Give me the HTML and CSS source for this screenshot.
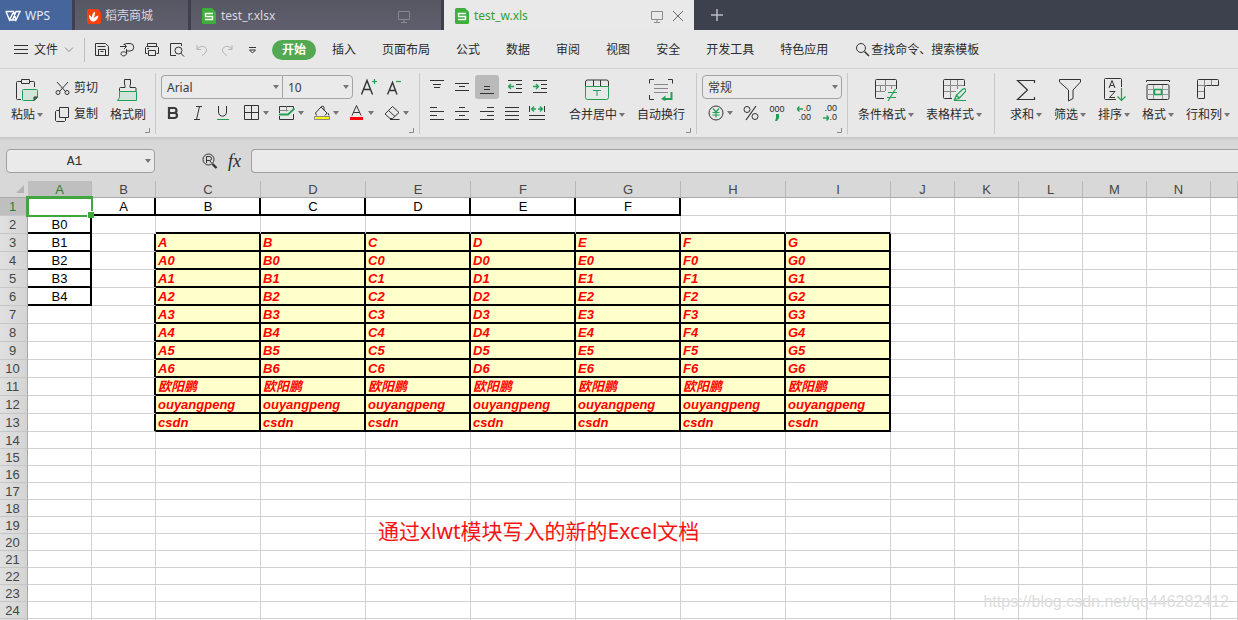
FILE: index.html
```html
<!DOCTYPE html>
<html lang="zh-CN">
<head>
<meta charset="utf-8">
<meta name="viewport" content="width=device-width, initial-scale=1">
<title>test_w.xls - WPS</title>
<link rel="stylesheet" href="styles.css">
</head>
<body>
<header class="tabs">
  <button class="tab tab-home">
    <svg width="16" height="12" viewBox="0 0 16 12" class="line white"><path d="M.5 1.500H4M1 1.500 4.500 10 8 3M3.500 1.500h5L11 10l4-8.500h-4L7.500 10h-3M7.500 10H11" stroke-width="1.400"/></svg>
    <span>WPS</span>
  </button>
  <button class="tab tab-store">
    <svg width="14" height="15" viewBox="0 0 14 15"><path d="M2 0h7a5 5 0 0 1 5 5v8a2 2 0 0 1-2 2H2a2 2 0 0 1-2-2V2a2 2 0 0 1 2-2z" fill="#f5410c"/><path d="M2 6c1.500.5 2.500 1.500 3 3C4.500 6.500 5.500 4 8 2.500c.5 3-1 5-1.500 7C7.500 8 9 7 11.500 6.500 11 10 9 12.500 6 12.500 3 12 2 9 2 6z" fill="#fff"/></svg>
    <span>稻壳商城</span>
  </button>
  <button class="tab tab-file">
    <svg width="14" height="16" viewBox="0 0 14 16"><path d="M1.500 0H10l4 4v10.500a1.500 1.500 0 0 1-1.500 1.500h-11A1.500 1.500 0 0 1 0 14.500v-13A1.500 1.500 0 0 1 1.500 0z" fill="#3fae3c"/><path d="M11 5.500H3.500v3h7v3H3" fill="none" stroke="#fff" stroke-width="1.400"/></svg>
    <span>test_r.xlsx</span>
    <svg class="line dim tab-screen" width="12" height="12" viewBox="0 0 12 12"><path d="M.5.500h11v8H.5zM6 8.500v3M3 11.500h6"/></svg>
  </button>
  <button class="tab tab-file tab-active">
    <svg width="14" height="16" viewBox="0 0 14 16"><path d="M1.500 0H10l4 4v10.500a1.500 1.500 0 0 1-1.500 1.500h-11A1.500 1.500 0 0 1 0 14.500v-13A1.500 1.500 0 0 1 1.500 0z" fill="#3fae3c"/><path d="M11 5.500H3.500v3h7v3H3" fill="none" stroke="#fff" stroke-width="1.400"/></svg>
    <span>test_w.xls</span>
    <svg class="line dim tab-screen" width="12" height="12" viewBox="0 0 12 12"><path d="M.5.500h11v8H.5zM6 8.500v3M3 11.500h6"/></svg>
    <svg class="line tab-close" width="10" height="10" viewBox="0 0 10 10"><path d="M0 0 10 10M10 0 0 10"/></svg>
  </button>
  <button class="tab-new" aria-label="新建"><svg class="line" width="12" height="12" viewBox="0 0 12 12"><path d="M6 0v12M0 6h12" stroke-width="1.500"/></svg></button>
</header>

<nav class="menu">
  <button class="menu-file">
    <svg class="line" width="14" height="11" viewBox="0 0 14 11"><path d="M0 1.500h14M0 5.500h14M0 9.500h14"/></svg>
    <span>文件</span>
    <svg class="line dim" width="10" height="6" viewBox="0 0 10 6"><path d="M1 .5 5 4.500 9 .5"/></svg>
  </button>
  <div class="quick">
    <button aria-label="保存"><svg class="line" width="16" height="16" viewBox="0 0 16 16"><path d="M1.500 1.500h10l3 3v9h-13zM3.500 4.500h8M4.500 13.500v-6h7v6M6.500 9.500h3"/></svg></button>
    <button aria-label="输出"><svg class="line" width="16" height="16" viewBox="0 0 16 16"><path d="M1 4.500h6M5 2l2.500 2.500L5 7M4.500 2.500 8 1.500h3a3.500 3.500 0 0 1 0 7.500H7.500M7.500 7v4c0 4-5.500 3.500-5.500.5 0-2.500 5-2 6 0"/></svg></button>
    <button aria-label="打印"><svg class="line" width="16" height="16" viewBox="0 0 16 16"><path d="M3.500 4.500v-3h9v3M3.500 11.500h-2v-6l1-1h11l1 1v6h-2M4.500 8.500h7v5h-7zM3 6.500h2"/></svg></button>
    <button aria-label="打印预览"><svg class="line" width="16" height="16" viewBox="0 0 16 16"><path d="M7 13.500H1.500v-12h11V4M11.500 11 15 14.500"/><circle cx="9.500" cy="8.500" r="3.500"/></svg></button>
    <button aria-label="撤销"><svg class="line faint" width="16" height="16" viewBox="0 0 16 16"><path d="M3 3v4.500h4M3 7.500C5 3.500 12 3 12.500 8c0 2.500-2 4-4.500 5.500"/></svg></button>
    <button aria-label="恢复"><svg class="line faint" width="16" height="16" viewBox="0 0 16 16"><path d="M13 3v4.500H9M13 7.500C11 3.500 4 3 3.500 8c0 2.500 2 4 4.500 5.500"/></svg></button>
    <button aria-label="更多"><svg class="line" width="16" height="16" viewBox="0 0 16 16"><path d="M5 5.500h7M5.500 8 8.500 11 11.500 8z"/></svg></button>
  </div>
  <div class="menu-items">
    <button class="current">开始</button><button>插入</button><button>页面布局</button><button>公式</button><button>数据</button><button>审阅</button><button>视图</button><button>安全</button><button>开发工具</button><button>特色应用</button>
  </div>
  <button class="find">
    <svg class="line" width="15" height="15" viewBox="0 0 15 15"><circle cx="6" cy="6" r="4.500"/><path d="M9.500 9.500 14 14" stroke-width="1.500"/></svg>
    <span>查找命令、搜索模板</span>
  </button>
</nav>

<section class="ribbon" aria-label="开始">
  <div class="group g-clip">
    <button class="big">
      <svg class="line" width="24" height="24" viewBox="0 0 24 24"><path d="M6.500 3.500h-4a1 1 0 0 0-1 1v16a1 1 0 0 0 1 1H6M14.500 3.500h4a1 1 0 0 1 1 1V9M6.500 1.500h8v4h-8z"/><path class="green fill" d="M8.500 11.500h13a1 1 0 0 1 1 1V19l-3.500 3.500H8.500a1 1 0 0 1-1-1v-9a1 1 0 0 1 1-1z"/><path d="M19 22.500V19h3.500z" fill="#239f54"/></svg>
      <span class="lbl">粘贴<i class="caret"></i></span>
    </button>
    <div class="pair">
      <button><svg class="line" width="15" height="15" viewBox="0 0 15 15"><path d="M2 1l8.500 9.500M13 1 4.500 10.500"/><circle cx="3" cy="11.500" r="2"/><circle cx="12" cy="11.500" r="2"/></svg>剪切</button>
      <button><svg class="line" width="15" height="15" viewBox="0 0 15 15"><path d="M4.500.5h9v10h-9zM4.500 3.500h-3l-1 1v9l1 1h8l1-1v-3"/></svg>复制</button>
    </div>
    <button class="big">
      <svg class="line" width="24" height="24" viewBox="0 0 24 24"><path d="M3.500 13V10.500a1 1 0 0 1 1-1H9V7.500L8.500 6V1.500h6V6L14 7.500v2h5a1 1 0 0 1 1 1V13"/><path class="green fill" d="M3.500 13.500h17v9h-19l2-3z"/></svg>
      <span class="lbl">格式刷</span>
    </button>
    <svg class="line dim launch" width="5" height="5" viewBox="0 0 5 5"><path d="M4.500 0v4.500H0"/></svg>
  </div>

  <div class="group g-font">
    <div class="rows">
      <div class="row top">
        <div class="combos">
          <label class="combo c-font"><select aria-label="字体"><option>Arial</option></select><i class="caret"></i></label>
          <label class="combo c-size"><select aria-label="字号"><option>10</option></select><i class="caret"></i></label>
        </div>
        <button aria-label="增大字号"><svg class="line" width="18" height="18" viewBox="0 0 18 18"><path d="M.5 16.500 6 2.500l5.500 14M2.500 11.500h7" stroke-width="1.400"/><path class="green" d="M11 3.500h5M13.500 1v5" stroke-width="1.200"/></svg></button>
        <button aria-label="减小字号"><svg class="line" width="18" height="18" viewBox="0 0 18 18"><path d="M.5 16.500 5.500 4.500l4.500 12M2.500 12.500h6" stroke-width="1.400"/><path class="green" d="M9 3.500h5" stroke-width="1.200"/></svg></button>
      </div>
      <div class="row low font-low">
        <button aria-label="加粗"><svg width="16" height="16" viewBox="0 0 16 16"><path d="M4 3h5a2.500 2.500 0 0 1 0 5H4zM4 8h5.500a2.500 2.500 0 0 1 0 5H4z" fill="none" stroke="#3a3a3a" stroke-width="2.200"/></svg></button>
        <button aria-label="倾斜"><svg class="line" width="16" height="16" viewBox="0 0 16 16"><path d="M6 1.500h6M4 14.500h6M9.500 1.500l-3 13"/></svg></button>
        <button aria-label="下划线"><svg class="line" width="16" height="16" viewBox="0 0 16 16"><path d="M3.500 1v6c0 5.500 8 5.500 8 0V1"/><path class="green" d="M2 14.500h12"/></svg></button>
        <div class="splits">
          <button aria-label="边框"><svg class="line" width="16" height="16" viewBox="0 0 16 16"><path d="M.5.500h14v14H.5zM7.500.5v14M.5 7.500h14"/></svg><i class="caret"></i></button>
          <button aria-label="绘制边框"><svg class="line" width="16" height="16" viewBox="0 0 16 16"><path d="M.5 8V1.500h14V4M14.500 9v5.500H.5V11"/><path d="M7.500 1.500v5M.5 5.500h9" stroke="#888"/><path class="green" d="M0 9.500h9l6.500-6" stroke-width="1.800"/></svg><i class="caret"></i></button>
          <button aria-label="填充颜色"><svg class="line" width="16" height="16" viewBox="0 0 16 16"><path d="M2.500 10.500 1.500 8 7 2c1-1.500 3-1 3 .5v3M7 2l6 6-2 2.500M14 8l1 2.500"/><path d="M.5 11.500h15v3H.5z" fill="#ff0" stroke="#888"/></svg><i class="caret"></i></button>
          <button aria-label="字体颜色"><svg class="line" width="16" height="16" viewBox="0 0 16 16"><path d="M3 10.500 7.500.5l4.500 10M4.500 7.500h6"/><path d="M1 13.500h13" stroke="red" stroke-width="3"/></svg><i class="caret"></i></button>
          <button aria-label="清除"><svg class="line" width="16" height="16" viewBox="0 0 16 16"><path d="M8.500 1.500 15 7.500l-6.500 6H6L1 9zM4.500 5.500l6.500 6M6 14.500h9.500"/></svg><i class="caret"></i></button>
        </div>
      </div>
    </div>
    <svg class="line dim launch" width="5" height="5" viewBox="0 0 5 5"><path d="M4.500 0v4.500H0"/></svg>
  </div>

  <div class="group g-align">
    <div class="align">
      <button aria-label="顶端对齐"><svg class="line" width="14" height="14" viewBox="0 0 14 14"><path d="M0 .5h14M3 4.500h8M4 7.500h6"/></svg></button>
      <button aria-label="垂直居中"><svg class="line" width="14" height="14" viewBox="0 0 14 14"><path d="M0 3.500h14M4 6.500h6M0 10.500h14"/></svg></button>
      <button aria-label="底端对齐" class="pressed"><svg class="line" width="14" height="14" viewBox="0 0 14 14"><path d="M4 6.500h6M4 9.500h6M0 13.500h14"/></svg></button>
      <button aria-label="减少缩进" class="indent"><svg class="line" width="14" height="14" viewBox="0 0 14 14"><path d="M0 .5h14M8 4.500h6M8 8.500h6M0 12.500h14"/><path class="green" d="M6 6.500H.5M3 4 .5 6.500 3 9" stroke-width="1.300"/></svg></button>
      <button aria-label="增加缩进" class="indent"><svg class="line" width="14" height="14" viewBox="0 0 14 14"><path d="M0 .5h14M8 4.500h6M8 8.500h6M0 12.500h14"/><path class="green" d="M0 6.500h5.500M3 4l2.500 2.500L3 9" stroke-width="1.300"/></svg></button>
      <button aria-label="左对齐"><svg class="line" width="14" height="14" viewBox="0 0 14 14"><path d="M0 1.500h7M0 5.500h14M0 9.500h7M0 13.500h14"/></svg></button>
      <button aria-label="水平居中"><svg class="line" width="14" height="14" viewBox="0 0 14 14"><path d="M4 1.500h6M0 5.500h14M4 9.500h6M0 13.500h14"/></svg></button>
      <button aria-label="右对齐"><svg class="line" width="14" height="14" viewBox="0 0 14 14"><path d="M7 1.500h7M0 5.500h14M7 9.500h7M0 13.500h14"/></svg></button>
      <button aria-label="两端对齐"><svg class="line" width="14" height="14" viewBox="0 0 14 14"><path d="M0 1.500h14M0 5.500h14M0 9.500h14M0 13.500h14"/></svg></button>
      <button aria-label="分散对齐"><svg class="line" width="16" height="14" viewBox="0 0 16 14"><path d="M.5 0v6M15.500 0v6M0 9.500h16M0 13.500h16"/><path class="green" d="M2.500 3H7M9 3h4.500M5 .5 2.500 3 5 5.500M11 .5 13.500 3 11 5.500" stroke-width="1.300"/></svg></button>
    </div>
    <button class="big merge">
      <svg class="line" width="24" height="24" viewBox="0 0 24 24"><path d="M.5 8.500V4a2 2 0 0 1 2-2h19a2 2 0 0 1 2 2v4.500M8.500 2v6M15.500 2v6"/><path class="green" d="M.5 8.500h23v11a2 2 0 0 1-2 2h-19a2 2 0 0 1-2-2zM8 12.500h8M12 12.500V18"/></svg>
      <span class="lbl">合并居中<i class="caret"></i></span>
    </button>
    <button class="big">
      <svg class="line" width="24" height="24" viewBox="0 0 24 24"><path d="M.5 5.500v-4H5M19 1.500h4.500v4M.5 17v4.500H5"/><path d="M5 6.500h14M5 10.500h14M5 14.500h14" stroke="#888"/><path class="green" d="M22.500 14v7H14" stroke-width="2"/><path d="M16.500 17.500v5.500L12 21z" fill="#239f54" stroke="none"/></svg>
      <span class="lbl">自动换行</span>
    </button>
    <svg class="line dim launch" width="5" height="5" viewBox="0 0 5 5"><path d="M4.500 0v4.500H0"/></svg>
  </div>

  <div class="group g-number">
    <div class="rows">
      <label class="combo c-number"><select aria-label="数字格式"><option>常规</option></select><i class="caret"></i></label>
      <div class="row low num-low">
        <button aria-label="货币"><svg class="line" width="16" height="16" viewBox="0 0 16 16"><circle cx="8" cy="8" r="7"/><path class="green" d="M5 3.500l3 3.500 3-3.500M8 7v5.500M4.500 7.500h7M4.500 10h7" stroke-width="1.200"/></svg><i class="caret"></i></button>
        <button aria-label="百分比"><svg class="line" width="16" height="16" viewBox="0 0 16 16"><circle cx="4" cy="4.500" r="3"/><circle cx="12" cy="11.500" r="3"/><path d="M13 1 3 15" stroke-width="1.200"/></svg></button>
        <button class="digits" aria-label="千位分隔"><span>000</span><svg width="4" height="7" viewBox="0 0 4 7"><path d="M1 0h3v4L2 7H0l1-3z" fill="#239f54"/></svg></button>
        <button class="digits right" aria-label="增加小数位"><span><svg class="line" width="6" height="6" viewBox="0 0 6 6"><path class="green" d="M0 3h6M2.500.5 0 3l2.500 2.500" stroke-width="1.300"/></svg>.0</span><span>.00</span></button>
        <button class="digits right" aria-label="减少小数位"><span>.00</span><span><svg class="line" width="6" height="6" viewBox="0 0 6 6"><path class="green" d="M0 3h6M3.500.5 6 3 3.500 5.500" stroke-width="1.300"/></svg>.0</span></button>
      </div>
    </div>
    <svg class="line dim launch" width="5" height="5" viewBox="0 0 5 5"><path d="M4.500 0v4.500H0"/></svg>
  </div>

  <div class="group g-style">
    <button class="big">
      <svg class="line" width="24" height="24" viewBox="0 0 24 24"><path d="M10 20.500H2.500a1 1 0 0 1-1-1v-17a1 1 0 0 1 1-1h19a1 1 0 0 1 1 1V11"/><path d="M2 7.500h20M2 13.500h9M11.500 2v11M17.500 7.500V11M6.500 7.500v6" stroke="#888"/><path class="green" d="M14 14.500h9M13 19.500h9M21.500 11 14 23" stroke-width="1.200"/></svg>
      <span class="lbl">条件格式<i class="caret"></i></span>
    </button>
    <button class="big">
      <svg class="line" width="24" height="24" viewBox="0 0 24 24"><path d="M10 20.500H2.500a1 1 0 0 1-1-1v-17a1 1 0 0 1 1-1h19a1 1 0 0 1 1 1V8"/><path d="M2 7.500h20M2 13.500h12M8.500 2v18M15.500 2v9" stroke="#888"/><path class="green" d="M12.500 21.500 14.500 17l6.500-6c2-1 3.500.5 2.500 2.500l-6.500 7zM14.500 17l2.500 3M12 22.500h12" stroke-width="1.200"/></svg>
      <span class="lbl">表格样式<i class="caret"></i></span>
    </button>
  </div>

  <div class="group g-edit">
    <button class="big"><svg class="line" width="24" height="24" viewBox="0 0 24 24"><path d="M20.500 5V2.500h-17L13.500 12l-10 9.500h17V19" stroke-width="1.200"/></svg><span class="lbl">求和<i class="caret"></i></span></button>
    <button class="big"><svg class="line" width="24" height="24" viewBox="0 0 24 24"><path d="M1.500 1.500h21V4L15 12v8.500L10.500 23V12L1.500 4z"/></svg><span class="lbl">筛选<i class="caret"></i></span></button>
    <button class="big"><svg class="line" width="24" height="24" viewBox="0 0 24 24"><path d="M19.500 9V1.500a1 1 0 0 0-1-1h-15a1 1 0 0 0-1 1v19a1 1 0 0 0 1 1H14M7 10l3-7.500L13 10M8 7.500h4M7.500 13.500H13l-5.500 6H13"/><path class="green" d="M19.500 10v12.500M15.500 18.500l4 4 4-4" stroke-width="1.200"/></svg><span class="lbl">排序<i class="caret"></i></span></button>
    <button class="big"><svg class="line" width="24" height="24" viewBox="0 0 24 24"><path d="M.5 4V2.500h23V4M2.500 6.500h19a1.500 1.500 0 0 1 1.500 1.500v12a1.500 1.500 0 0 1-1.500 1.500h-19A1.500 1.500 0 0 1 1 20V8a1.500 1.500 0 0 1 1.500-1.500z"/><path d="M1 11.500h22M1 16.500h22M7.500 7v14M16.500 7v14" stroke="#999"/><path d="M8.500 11.500h7v5h-7z" fill="#e8e8e8" stroke="#239f54" stroke-width="1.600"/></svg><span class="lbl">格式<i class="caret"></i></span></button>
    <button class="big"><svg class="line" width="24" height="24" viewBox="0 0 24 24"><path d="M2.500 1.500h19a1 1 0 0 1 1 1v5h-12a2 2 0 0 0-2 2v11h-6a1 1 0 0 1-1-1v-17a1 1 0 0 1 1-1z"/><path d="M8.500 2v7M15.500 2v5.500M2 7.500h7M2 13.500h6" stroke="#888"/></svg><span class="lbl">行和列<i class="caret"></i></span></button>
  </div>
</section>

<section class="formula">
  <div class="namebox"><input type="text" value="A1" aria-label="名称框"><i class="caret"></i></div>
  <div class="fx">
    <button aria-label="浏览公式结果"><svg class="line" width="16" height="16" viewBox="0 0 16 16"><circle cx="6.500" cy="6.500" r="5.500"/><path d="M4.500 10V3.500h3a2 2 0 0 1 0 4h-3M7.500 7.500l2 2.500"/><path d="M10.500 11l4 4" stroke-width="2.400"/></svg></button>
    <button class="fx-btn" aria-label="插入函数">fx</button>
  </div>
  <input class="formula-input" type="text" aria-label="编辑栏">
</section>

<main class="sheet">
  <table class="grid" id="grid"></table>
  <p class="note">通过xlwt模块写入的新的Excel文档</p>
  <p class="watermark">https://blog.csdn.net/qq446282412</p>
</main>
<script src="script.js"></script>
</body>
</html>
```
FILE: styles.css
```css
* { box-sizing: border-box; }
body {
  margin: 0;
  height: 100vh;
  display: flex;
  flex-direction: column;
  overflow: hidden;
  background: #e8e8e8;
  color: #2b2b2b;
  font: 12px/16px "Noto Sans", "Noto Sans CJK SC", sans-serif;
}
button {
  margin: 0;
  padding: 0;
  border: 0;
  background: none;
  color: inherit;
  font: inherit;
}
svg { display: block; flex: none; }
.line { fill: none; stroke: #333; }
.line.white { stroke: #fff; }
.line.dim { stroke: #8a8a8a; }
.line.faint { stroke: #b4b4b4; }
.line .green { stroke: #239f54; }
.line .fill { fill: #d3e4da; }
.caret {
  flex: none;
  width: 6px;
  height: 4px;
  background: #757575;
  clip-path: polygon(0 0, 100% 0, 50% 100%);
}

/* Document tabs */
.tabs {
  display: flex;
  flex: none;
  height: 30px;
  gap: 3px;
  background: #3c414d;
}
.tab {
  display: flex;
  align-items: center;
  padding: 2px 12px 0;
  gap: 4px;
  color: #d8d8de;
  background: linear-gradient(#575663, #605f6d);
}
.tab-home { width: 72px; padding: 2px 5px 0; color: #e4eaf4; background: #45659c; }
.tab-store { width: 113px; }
.tab-file { width: 250px; padding: 2px 11px 0; gap: 5px; }
.tab-active { color: #35a032; background: #e9e9e9; }
.tab-screen { margin: 2px 31px 0 auto; }
.tab-file:not(.tab-active) .tab-screen { margin-right: 20px; }
.tab-active .tab-screen { margin-right: 5px; }
.line.tab-close { stroke: #666; }
.tab-new { padding: 0 14px; }
.tab-new .line { stroke: #b8bac0; }

/* Menu row */
.menu {
  display: flex;
  flex: none;
  align-items: center;
  height: 38px;
  padding-top: 1px;
}
.menu-file {
  display: flex;
  align-items: center;
  height: 24px;
  gap: 6px;
  padding: 0 10px 0 14px;
  border-right: 1px solid #bdbdbd;
}
.quick { display: flex; gap: 9px; padding: 0 12px 0 9px; }
.menu-items { display: flex; }
.menu-items button { padding: 2px 13px; }
.menu-items .current {
  margin-right: 3px;
  padding: 2px 10px;
  border-radius: 10px;
  background: #52a952;
  color: #fff;
  font-weight: bold;
}
.find { display: flex; align-items: center; gap: 1px; margin-left: 14px; }

/* Ribbon */
.ribbon {
  display: flex;
  flex: none;
  height: 69px;
  border-top: 1px solid #d3d3d3;
  white-space: nowrap;
}
.group {
  position: relative;
  display: flex;
  flex: none;
  align-items: flex-start;
  gap: 12px;
  padding: 6px 5px 0;
}
.group::after {
  content: "";
  position: absolute;
  top: 4px;
  right: 0;
  bottom: 3px;
  width: 1px;
  background: #c8c8c8;
}
.g-clip { width: 156px; padding-left: 11px; }
.g-font { width: 264px; }
.g-align { width: 277px; }
.g-number { width: 151px; }
.g-style { width: 147px; padding-left: 10px; }
.g-edit { flex: 1 0 auto; padding-left: 15px; }
.g-edit::after { display: none; }
.launch { position: absolute; right: 6px; bottom: 4px; }
.big {
  display: flex;
  flex-direction: column;
  align-items: center;
  gap: 5px;
  padding-top: 3px;
}
.merge { margin-left: 8px; }
.lbl { display: flex; align-items: center; gap: 2px; }
.pair { display: flex; flex-direction: column; gap: 10px; padding-top: 5px; }
.pair button { display: flex; align-items: center; gap: 4px; }
.rows { display: flex; flex-direction: column; gap: 4px; }
.row { display: flex; align-items: center; }
.row button { display: flex; align-items: center; gap: 3px; }
.top { gap: 8px; }
.low { height: 20px; }
.font-low { gap: 9px; padding-left: 4px; }
.splits { display: flex; gap: 10px; padding-left: 4px; }
.num-low { gap: 10px; padding-left: 6px; }
.row .digits {
  width: 16px;
  flex-direction: column;
  align-items: center;
  gap: 0;
  font: 9px/9px "Liberation Sans", sans-serif;
}
.row .right { align-items: flex-end; }
.digits span { display: flex; align-items: center; }
.combos { display: flex; }
.combo {
  display: grid;
  align-items: center;
  height: 24px;
  border: 1px solid #a3a3a3;
  border-radius: 4px;
  background: #eaeaea;
}
.combo > *, .namebox > * { grid-area: 1 / 1; }
.combo .caret, .namebox .caret { justify-self: end; margin-right: 3px; pointer-events: none; }
.combo select {
  appearance: none;
  width: 100%;
  height: 22px;
  padding: 1px 5px 0;
  border: 0;
  background: none;
  color: #3a3a3a;
  font: inherit;
}
.c-font { width: 121px; border-radius: 4px 0 0 4px; border-right: 0; }
.c-size { width: 71px; border-radius: 0 4px 4px 0; }
.c-number { width: 140px; }
.align {
  display: grid;
  grid-template-columns: repeat(5, 24px);
  grid-template-rows: 24px 20px;
  gap: 4px 1px;
}
.align button { display: grid; place-items: center; border-radius: 3px; }
.align .indent { padding-left: 6px; }
.align .pressed { background: #bababa; }

/* Formula bar */
.formula {
  display: flex;
  flex: none;
  align-items: center;
  height: 44px;
  padding: 4px 0 0 6px;
  background: linear-gradient(#c4c4c4, #d8d8d8 4px);
}
.namebox, .formula-input {
  height: 24px;
  border: 1px solid #a0a0a0;
  border-radius: 4px;
  background: #eaeaea;
}
.namebox { display: grid; align-items: center; width: 149px; }
.namebox input {
  width: 100%;
  padding: 2px 18px 0 6px;
  border: 0;
  background: none;
  color: #333;
  font: 13px/16px "Liberation Mono", monospace;
  text-align: center;
}
.fx { display: flex; align-items: center; justify-content: flex-end; gap: 10px; width: 96px; padding-right: 10px; }
.fx-btn { font: italic 18px/20px "Liberation Serif", serif; }
.formula-input { flex: 1; padding: 0 6px; border-right: 0; border-radius: 4px 0 0 4px; }

/* Sheet */
.sheet { position: relative; flex: 1; min-height: 0; overflow: hidden; background: #fff; }
.grid {
  width: 100%;
  table-layout: fixed;
  border-collapse: separate;
  border-spacing: 0;
  font: 13px/15px "Liberation Sans", Arial, sans-serif;
}
.w-head { width: 28px; }
.w-small { width: 64px; }
.w-large { width: 105px; }
.grid th, .grid td {
  height: 17px;
  padding: 0;
  border: 0 solid #d0d0d0;
  border-width: 0 1px 1px 0;
  white-space: nowrap;
}
.grid th { color: #454545; font-weight: normal; background: #d8d8d8; }
.grid thead th {
  border-bottom-color: #a8a8a8;
  border-right-color: #b8b8b8;
}
.grid tbody th {
  padding-right: 2px;
  border-right-color: #a8a8a8;
  border-bottom-color: #c6c6c6;
  background: linear-gradient(90deg, #e0e0e0, #d4d4d4);
}
.grid .tall > * { height: 18px; }
.grid th.on { color: #2f7d33; background: #bfbfbf; }
.grid .corner { border-right-color: #d8d8d8; }
.corner svg { margin: 0 3px 0 auto; }
.grid .boxed { color: #000; text-align: center; }
.grid .styled { padding-left: 2px; color: red; background: #ffc; font-weight: bold; font-style: italic; font-family: "Liberation Sans", "Noto Sans CJK SC", sans-serif; }
.grid .rb { border-right-color: #000; box-shadow: inset -1px 0 #000; }
.grid .bb { border-bottom-color: #000; box-shadow: inset 0 -1px #000; }
.grid .rb.bb { box-shadow: inset -1px -1px #000; }
.cell-active { position: relative; }
.cursor {
  position: absolute;
  z-index: 1;
  inset: -2px;
  border: 3px solid #41a540;
  border-width: 3px 2px 2px 3px;
}
.cursor::after {
  content: "";
  position: absolute;
  right: -3px;
  bottom: -3px;
  width: 6px;
  height: 6px;
  border: solid #fff;
  border-width: 1px 0 0 1px;
  background: #41a540;
}
.note {
  position: absolute;
  left: 378px;
  top: 336px;
  margin: 0;
  color: #f51414;
  font: 21px/28px "Noto Sans", "Noto Sans CJK SC", sans-serif;
  white-space: nowrap;
}
.watermark {
  position: absolute;
  right: 9px;
  bottom: 8px;
  margin: 0;
  color: #dcdcdc;
  font: 16px/20px "Liberation Sans", Arial, sans-serif;
}
```
FILE: script.js
```javascript
const letters = 'ABCDEFGHIJKLMN'.split('');
const wide = 'CDEFGHI';
const lastRow = 24;
const el = (tag, cls, text) => {
  const node = document.createElement(tag);
  if (cls) node.className = cls;
  if (text !== undefined) node.textContent = text;
  return node;
};

// Cell text for the block C3:I13.
const styledText = (row, i) => {
  const name = letters[i];
  if (row === 3) return name;
  if (row <= 10) return name + (row - 4);
  return ['欧阳鹏', 'ouyangpeng', 'csdn'][row - 11];
};

const makeCell = (row, col) => {
  const td = el('td');
  const letter = letters[col];
  const inBlock = col >= 2 && col <= 8;
  if (row === 1 && col >= 1 && col <= 6) {
    td.className = 'boxed rb bb';
    td.textContent = letters[col - 1];
  } else if (letter === 'A' && row >= 2 && row <= 6) {
    td.className = 'boxed rb bb';
    td.textContent = 'B' + (row - 2);
  } else if (inBlock && row >= 3 && row <= 13) {
    td.className = 'styled rb bb';
    td.textContent = styledText(row, col - 2);
  } else if (inBlock && row === 2) {
    td.className = 'bb';
  } else if (letter === 'B' && row >= 3 && row <= 13) {
    td.className = 'rb';
  }
  if (row === 1 && letter === 'A') {
    td.className = 'cell-active';
    td.append(el('div', 'cursor'));
  }
  return td;
};

const grid = document.getElementById('grid');
const cols = el('colgroup');
cols.append(el('col', 'w-head'));
letters.forEach(l => cols.append(el('col', wide.includes(l) ? 'w-large' : 'w-small')));
cols.append(el('col'));

const head = el('thead');
const headRow = el('tr');
const corner = el('th', 'corner');
corner.innerHTML = '<svg width="8" height="8" viewBox="0 0 8 8"><path d="M8 0v8H0z" fill="#b4b4b4"/></svg>';
headRow.append(corner);
letters.forEach(l => headRow.append(el('th', l === 'A' ? 'on' : '', l)));
headRow.append(el('th'));
head.append(headRow);

const body = el('tbody');
for (let row = 1; row <= lastRow + 1; row++) {
  const tr = el('tr', row <= 13 ? 'tall' : '');
  tr.append(el('th', row === 1 ? 'on' : '', row <= lastRow ? row : ''));
  for (let col = 0; col <= letters.length; col++) tr.append(makeCell(row, col));
  body.append(tr);
}
grid.append(cols, head, body);
```
